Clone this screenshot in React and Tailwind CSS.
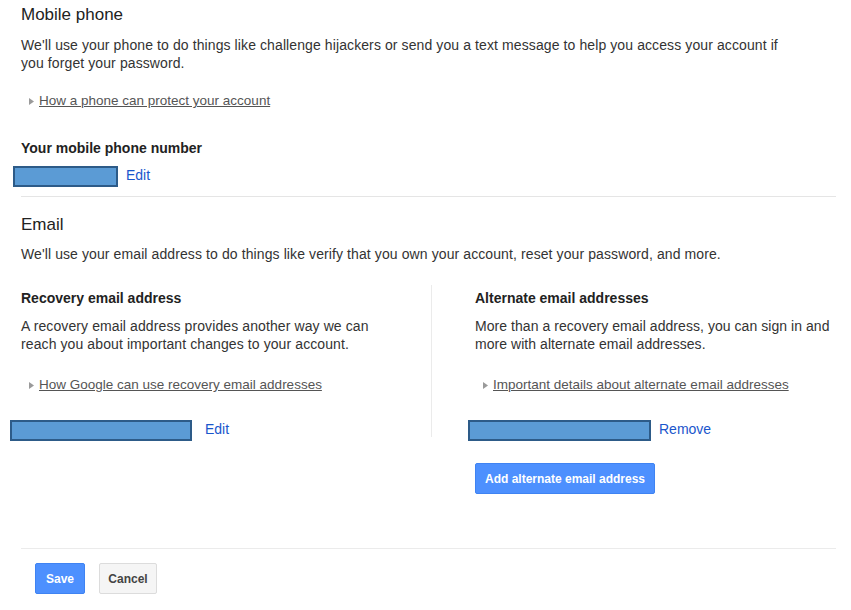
export default function App() {
  const Tri = () => (
    <svg width="5" height="7" viewBox="0 0 5 7" className="shrink-0">
      <path d="M0 0 L5 3.5 L0 7 Z" fill="#9a9a9a" />
    </svg>
  );
  const Box = ({ w, ml }) => (
    <div
      className={`h-[21px] bg-[#5b9bd5] border-2 border-[#2d5b88] shrink-0 ${ml}`}
      style={{ width: w }}
    />
  );
  return (
    <div className="w-[851px] h-[610px] bg-white pl-[21px] pr-[15px] font-['Liberation_Sans',Arial,sans-serif] text-[#333] overflow-hidden">
      <h2 className="text-[17px] leading-[20px] pt-[5px] text-[#222]">Mobile phone</h2>
      <p className="mt-[11px] text-[14px] leading-[18px] w-[775px] tracking-[0.1px]">
        We'll use your phone to do things like challenge hijackers or send you a text message to help you access your account if you forget your password.
      </p>
      <div className="mt-[20px] ml-[8px] flex items-center gap-[5px] text-[13.5px] leading-[18px]">
        <Tri />
        <span className="underline text-[#555]">How a phone can protect your account</span>
      </div>
      <div className="mt-[29px] text-[14px] leading-[18px] font-bold text-[#222]">Your mobile phone number</div>
      <div className="mt-[9px] flex items-start gap-[8px]">
        <Box w={105} ml="-ml-[8px]" />
        <span className="text-[14px] leading-[18px] text-[#1a56cc]">Edit</span>
      </div>
      <div className="mt-[9px] border-t border-[#e5e5e5]" />
      <h2 className="mt-[18px] text-[17px] leading-[20px] text-[#222]">Email</h2>
      <p className="mt-[10px] text-[14px] leading-[18px] tracking-[0.1px]">
        We'll use your email address to do things like verify that you own your account, reset your password, and more.
      </p>
      <div className="mt-[22px] flex items-start">
        <div className="w-[411px] border-r border-[#ebebeb] pt-[4px] h-[152px]">
          <div className="text-[14px] leading-[18px] font-bold text-[#222]">Recovery email address</div>
          <p className="mt-[10px] text-[14px] leading-[18px] pr-[40px] tracking-[0.1px]">
            A recovery email address provides another way we can reach you about important changes to your account.
          </p>
          <div className="mt-[23px] ml-[8px] flex items-center gap-[5px] text-[13.5px] leading-[18px]">
            <Tri />
            <span className="underline text-[#555]">How Google can use recovery email addresses</span>
          </div>
          <div className="mt-[26px] flex items-start gap-[13px]">
            <Box w={182} ml="-ml-[11px]" />
            <span className="text-[14px] leading-[18px] text-[#1a56cc]">Edit</span>
          </div>
        </div>
        <div className="flex-1 pl-[43px] pt-[4px]">
          <div className="text-[14px] leading-[18px] font-bold text-[#222]">Alternate email addresses</div>
          <p className="mt-[10px] text-[14px] leading-[18px] tracking-[0.05px]">
            More than a recovery email address, you can sign in and more with alternate email addresses.
          </p>
          <div className="mt-[23px] ml-[8px] flex items-center gap-[5px] text-[13.5px] leading-[18px]">
            <Tri />
            <span className="underline text-[#555]">Important details about alternate email addresses</span>
          </div>
          <div className="mt-[26px] flex items-start gap-[8px]">
            <Box w={183} ml="-ml-[7px]" />
            <span className="text-[14px] leading-[18px] text-[#1a56cc]">Remove</span>
          </div>
          <button className="mt-[22px] h-[31px] w-[180px] rounded-[2px] bg-[#4d90fe] border border-[#3f83f2] text-white text-[12px] font-bold">
            Add alternate email address
          </button>
        </div>
      </div>
      <div className="mt-[54px] border-t border-[#ebebeb]" />
      <div className="mt-[14px] ml-[14px] flex gap-[14px]">
        <button className="h-[31px] w-[50px] rounded-[2px] bg-[#4d90fe] border border-[#3f83f2] text-white text-[12px] font-bold">
          Save
        </button>
        <button className="h-[31px] w-[58px] rounded-[2px] bg-[#f5f5f5] border border-[#dcdcdc] text-[#444] text-[12px] font-bold">
          Cancel
        </button>
      </div>
    </div>
  );
}
